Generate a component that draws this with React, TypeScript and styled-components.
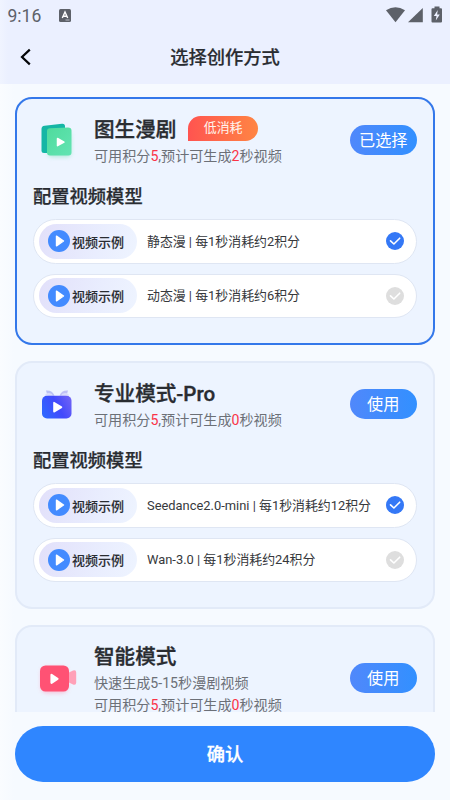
import React from 'react';
import styled, { createGlobalStyle } from 'styled-components';

const GlobalStyle = createGlobalStyle`
  * { box-sizing: border-box; }
  body { margin: 0; background: #f6faff; }
  button { font: inherit; border: 0; padding: 0; cursor: pointer; }
`;

const Screen = styled.div`
  width: 450px;
  height: 800px;
  overflow: hidden;
  display: flex;
  flex-direction: column;
  background: linear-gradient(90deg, #fafcff 0, #f6faff 14px);
  color: #292c31;
  font-family: Roboto, 'Noto Sans CJK SC', sans-serif;
  white-space: nowrap;
`;

const Header = styled.header`
  flex: none;
  height: 84px;
  background: linear-gradient(90deg, #f0f4ff 0, #ebf0ff 8px);
`;

const StatusBar = styled.div`
  height: 30px;
  display: flex;
  align-items: center;
  padding: 0 7px 0 7.5px;
  color: #5d6169;
`;

const Clock = styled.span`
  font-size: 17.5px;
  line-height: 30px;
  width: 51px;
  padding-top: 1px;
`;

const StatusIcons = styled.div`
  margin-left: auto;
  display: flex;
`;

const TitleBar = styled.div`
  height: 54px;
  display: grid;
  grid-template-columns: 60px 1fr 60px;
  align-items: center;
`;

const BackButton = styled.button`
  background: none;
  height: 24px;
  padding-left: 18px;
  display: flex;
  align-items: center;
`;

const PageTitle = styled.h1`
  margin: 1px 0 0;
  text-align: center;
  font-size: 18.3px;
  line-height: 26px;
  font-weight: 500;
  -webkit-text-stroke: 0.2px currentColor;
`;

const ModeList = styled.main`
  flex: none;
  height: 628px;
  overflow: hidden;
  padding: 13px 15px 0;
  display: flex;
  flex-direction: column;
  gap: 16px;
`;

const Card = styled.section<{ $active?: boolean }>`
  flex: none;
  height: 248px;
  border: 2px solid ${p => (p.$active ? '#3478ea' : '#e2eaf8')};
  border-radius: 17px;
  background: #edf4ff;
  padding: 16px 16px 0;
`;

const CardHead = styled.div<{ $tall?: boolean }>`
  display: flex;
  align-items: center;
  height: ${p => (p.$tall ? 72 : 52)}px;
`;

const IconSlot = styled.div`
  width: 61px;
  flex: none;
  display: flex;
  padding-bottom: 2px;
  svg { display: block; overflow: visible; }
`;

const CardText = styled.div`
  flex: 1;
`;

const TitleRow = styled.div`
  display: flex;
  height: 27px;
  gap: 11.5px;
`;

const ModeTitle = styled.h2`
  margin: 0;
  font-size: 20.6px;
  line-height: 30px;
  font-weight: 500;
  -webkit-text-stroke: 0.35px currentColor;
`;

const Tag = styled.span`
  width: 70.5px;
  height: 25px;
  margin-top: 1px;
  border-radius: 13px 13px 13px 0;
  background: linear-gradient(90deg, #ff5450, #ff8543);
  color: #fff4ec;
  font-size: 12.9px;
  line-height: 24px;
  text-align: center;
`;

const Note = styled.p`
  margin: 0;
  font-size: 14.1px;
  line-height: 21.5px;
  color: #6c7077;
`;

const NoteGroup = styled.div`
  padding-top: 4px;
`;

const Value = styled.span`
  color: #fa3347;
`;

const UseButton = styled.button`
  width: 67.5px;
  height: 30.5px;
  margin-bottom: 2px;
  border-radius: 16px;
  background: linear-gradient(90deg, #5088fb, #3290ff);
  color: #fff;
  font-size: 16.2px;
  line-height: 32px;
`;

const SectionTitle = styled.h3`
  margin: 16px 0 0;
  font-size: 18.3px;
  line-height: 27px;
  font-weight: 500;
  -webkit-text-stroke: 0.25px currentColor;
`;

const ModelList = styled.div`
  display: flex;
  flex-direction: column;
  gap: 10px;
  margin-top: 9px;
`;

const ModelRow = styled.div`
  height: 44.5px;
  display: flex;
  align-items: center;
  border: 1.5px solid #dfe6f3;
  border-radius: 23px;
  background: #fff;
  padding: 0 12px 0 5px;
`;

const Sample = styled.button`
  width: 97.5px;
  height: 35px;
  border-radius: 18px;
  background: linear-gradient(105deg, #e2e0fa, #e9edfe 60%, #eef4ff);
  display: flex;
  align-items: center;
  gap: 2.5px;
  padding-left: 8.5px;
  color: #292c31;
  font-size: 13px;
  font-weight: 500;
  -webkit-text-stroke: 0.1px currentColor;
`;

const ModelName = styled.span`
  flex: 1;
  padding: 1px 0 0 10.5px;
  font-size: 12.9px;
  line-height: 20px;
  color: #36383c;
`;

const Footer = styled.footer`
  padding: 14px 15px 0;
`;

const ConfirmButton = styled.button`
  width: 100%;
  height: 56px;
  border-radius: 28px;
  background: #2f86ff;
  color: #fff;
  font-size: 18.3px;
  line-height: 57px;
  font-weight: 500;
  -webkit-text-stroke: 0.3px currentColor;
`;

const PlayIcon = () => (
  <svg width="22" height="22" viewBox="0 0 22 22">
    <circle cx="11" cy="11" r="11" fill="#438bff" />
    <path d="M8.5 6.2v9.6l7-4.8z" fill="#fff" stroke="#fff" strokeWidth="1.4" strokeLinejoin="round" />
  </svg>
);

const CheckIcon = ({ on }: { on?: boolean }) => (
  <svg width="18" height="18" viewBox="0 0 18 18">
    <circle cx="9" cy="9" r="9" fill={on ? '#3478f6' : '#dedede'} />
    <path d="M4.5 8.8l3.4 3.2 5.8-5.8" fill="none" stroke="#fff" strokeWidth="1.6" strokeLinecap="round" strokeLinejoin="round" />
  </svg>
);

const ComicIcon = () => (
  <svg width="46" height="46" viewBox="0 0 46 46">
    <defs>
      <linearGradient id="comicFront" x1="0" y1="0" x2="1" y2="1">
        <stop offset="0" stopColor="#4fdb9d" />
        <stop offset="1" stopColor="#63e4b3" />
      </linearGradient>
      <filter id="comicGlow" x="-30%" y="-30%" width="160%" height="160%"><feGaussianBlur stdDeviation="2" /></filter>
    </defs>
    <rect x="15" y="15" width="23" height="25" rx="4" fill="#77dfb5" opacity=".5" filter="url(#comicGlow)" />
    <path d="M11.5 8.8L29 6.700q3-.3 3 2.800V34q0 2-2 2H11q-2.500 0-2.500-2.500V12q0-2.800 3-3.200z" fill="#16b6a5" />
    <path d="M17 11.200L35 10.500q3.500 0 3.500 3V35.500q0 3-3 3H17q-3 0-3-3V14.200q0-3 3-3z" fill="url(#comicFront)" />
    <path d="M24.500 21.500v7.200l6.500-3.600z" fill="#fff" stroke="#fff" strokeWidth="1.500" strokeLinejoin="round" />
  </svg>
);

const TvIcon = () => (
  <svg width="46" height="46" viewBox="0 0 46 46">
    <defs>
      <linearGradient id="tvBody" x1="0" y1=".7" x2="1" y2=".3">
        <stop offset="0" stopColor="#2f66ff" />
        <stop offset=".55" stopColor="#4149fc" />
        <stop offset="1" stopColor="#6b60f6" />
      </linearGradient>
    </defs>
    <path d="M13 9.500q6.500-.5 8.500 5.300h-6q-2-2-2.500-5.300z" fill="#b9c1f4" />
    <path d="M35 9.500q-6.500-.5-8.500 5.300h6q2-2 2.500-5.300z" fill="#c0c1f6" />
    <path d="M12 14.800q.5-3 4-2.800 3 .3 4 2.800zM28 14.800q1-2.500 4-2.800 3.500-.2 4 2.800z" fill="#d9dcfb" />
    <rect x="9" y="14.800" width="29.500" height="22.700" rx="5" fill="url(#tvBody)" />
    <path d="M21 21.700v9l7.500-4.500z" fill="#fff" stroke="#fff" strokeWidth="1.600" strokeLinejoin="round" />
  </svg>
);

const CameraIcon = () => (
  <svg width="46" height="46" viewBox="0 0 46 46">
    <defs>
      <filter id="camGlow" x="-30%" y="-30%" width="160%" height="160%"><feGaussianBlur stdDeviation="2.2" /></filter>
    </defs>
    <rect x="8" y="12" width="27" height="26" rx="6" fill="#ff9ebc" opacity=".6" filter="url(#camGlow)" />
    <path d="M35 18l5-2.500q3.200-1 3.200 2V27.500q0 3-3.200 2l-5-2.500z" fill="#ffa0b8" />
    <rect x="7" y="10.500" width="29" height="26" rx="5.500" fill="#ff5274" />
    <path d="M18.500 19.800v8l6-4z" fill="#fff" stroke="#fff" strokeWidth="2.200" strokeLinejoin="round" />
  </svg>
);

interface Model { name: string; on?: boolean }

const Models = ({ items }: { items: Model[] }) => (
  <>
    <SectionTitle>配置视频模型</SectionTitle>
    <ModelList>
      {items.map(m => (
        <ModelRow key={m.name}>
          <Sample><PlayIcon />视频示例</Sample>
          <ModelName>{m.name}</ModelName>
          <CheckIcon on={m.on} />
        </ModelRow>
      ))}
    </ModelList>
  </>
);

interface ModeProps {
  title: string;
  icon: React.ReactNode;
  seconds: number;
  tag?: string;
  intro?: string;
  active?: boolean;
  models?: Model[];
}

const Mode = ({ title, icon, seconds, tag, intro, active, models }: ModeProps) => (
  <Card $active={active}>
    <CardHead $tall={!!intro}>
      <IconSlot>{icon}</IconSlot>
      <CardText>
        <TitleRow>
          <ModeTitle>{title}</ModeTitle>
          {tag && <Tag>{tag}</Tag>}
        </TitleRow>
        <NoteGroup>
          {intro && <Note>{intro}</Note>}
          <Note>可用积分<Value>5</Value>,预计可生成<Value>{seconds}</Value>秒视频</Note>
        </NoteGroup>
      </CardText>
      <UseButton>{active ? '已选择' : '使用'}</UseButton>
    </CardHead>
    {models && <Models items={models} />}
  </Card>
);

export default function App() {
  return (
    <>
      <GlobalStyle />
      <Screen>
        <Header>
          <StatusBar>
            <Clock>9:16</Clock>
            <svg width="12" height="13" viewBox="0 0 12 13">
              <rect width="12" height="13" rx="1.5" fill="#5d6169" />
              <path d="M3.300 9L6 3l2.700 6M4.300 7.200h3.400" fill="none" stroke="#fff" strokeWidth="1.4" />
              <path d="M6.500 11h4" stroke="#b9bcc5" strokeWidth="1" />
            </svg>
            <StatusIcons>
              <svg width="57" height="18" viewBox="0 0 57 18" fill="#5d6169">
                <path d="M0 4.300Q9.500-1.800 19 4.300L9.500 16.300z" />
                <path d="M22 16.300L36.800 2v14.300z" />
                <path d="M46.500 2.200h2V.5h5v1.700h1.500q1 0 1 1v12.200q0 1-1 1h-8.500q-1 0-1-1V3.200q0-1 1-1z" />
                <path d="M51.800 4l-4 6h2.700l-.7 4.500 4-6h-2.700z" fill="#edf1ff" />
              </svg>
            </StatusIcons>
          </StatusBar>
          <TitleBar>
            <BackButton aria-label="返回">
              <svg width="14" height="18" viewBox="0 0 14 18">
                <path d="M11.800 1.600L4 9l7.800 7.400" fill="none" stroke="#050608" strokeWidth="2.200" />
              </svg>
            </BackButton>
            <PageTitle>选择创作方式</PageTitle>
          </TitleBar>
        </Header>
        <ModeList>
          <Mode
            title="图生漫剧"
            tag="低消耗"
            icon={<ComicIcon />}
            seconds={2}
            active
            models={[
              { name: '静态漫 | 每1秒消耗约2积分', on: true },
              { name: '动态漫 | 每1秒消耗约6积分' },
            ]}
          />
          <Mode
            title="专业模式-Pro"
            icon={<TvIcon />}
            seconds={0}
            models={[
              { name: 'Seedance2.0-mini | 每1秒消耗约12积分', on: true },
              { name: 'Wan-3.0 | 每1秒消耗约24积分' },
            ]}
          />
          <Mode title="智能模式" icon={<CameraIcon />} seconds={0} intro="快速生成5-15秒漫剧视频" />
        </ModeList>
        <Footer>
          <ConfirmButton>确认</ConfirmButton>
        </Footer>
      </Screen>
    </>
  );
}
